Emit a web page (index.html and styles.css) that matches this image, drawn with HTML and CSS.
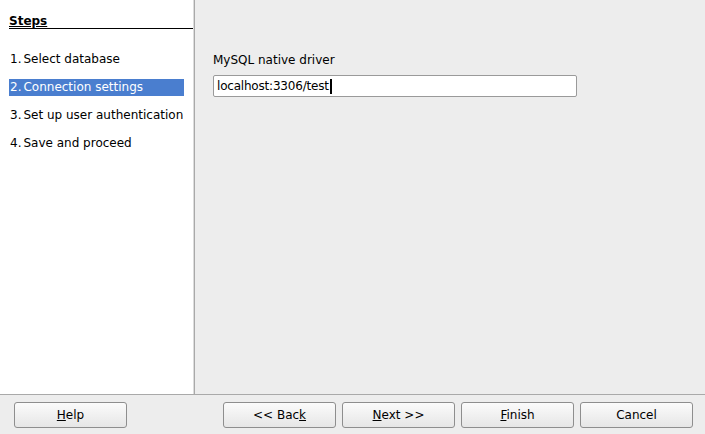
FILE: index.html
```html
<!DOCTYPE html>
<html>
<head>
<meta charset="utf-8">
<link rel="stylesheet" href="styles.css">
</head>
<body>
<div class="main">
  <div class="sidebar">
    <div class="steps-title"><span>Steps</span></div>
    <ul class="steps">
      <li><span class="num">1.</span>Select database</li>
      <li class="active"><span class="num">2.</span>Connection settings</li>
      <li><span class="num">3.</span>Set up user authentication</li>
      <li><span class="num">4.</span>Save and proceed</li>
    </ul>
  </div>
  <div class="content">
    <div class="label">MySQL native driver</div>
    <div class="input">localhost:3306/test<span class="caret"></span></div>
  </div>
</div>
<div class="footer">
  <button class="btn"><u>H</u>elp</button>
  <div class="spacer"></div>
  <button class="btn">&lt;&lt; Bac<u>k</u></button>
  <button class="btn"><u>N</u>ext &gt;&gt;</button>
  <button class="btn"><u>F</u>inish</button>
  <button class="btn">Cancel</button>
</div>
</body>
</html>
```
FILE: styles.css
```css
html, body {
  margin: 0;
  padding: 0;
}
body {
  width: 705px;
  height: 434px;
  background: #ededed;
  font-family: "DejaVu Sans", sans-serif;
  font-size: 12px;
  color: #000;
  overflow: hidden;
}
.main {
  display: flex;
  height: 394px;
}
.sidebar {
  width: 195px;
  box-sizing: border-box;
  background: #fff;
  border-right: 1px solid #a9a9a9;
  padding-left: 9px;
  box-shadow: inset -1px 0 0 #dcdcdc;
}
.steps-title {
  margin-top: 14px;
  height: 14px;
  border-bottom: 1px solid #000;
  margin-right: 1px;
  font-weight: bold;
  font-size: 12px;
  line-height: 15px;
}
.steps-title span {
  text-decoration: underline;
}
.steps {
  list-style: none;
  margin: 22px 0 0 0;
  padding: 0;
}
.steps li {
  height: 17px;
  line-height: 17px;
  margin-bottom: 11px;
  margin-right: 10px;
  padding-left: 1px;
  white-space: nowrap;
}
.steps .num {
  margin-right: 2px;
}
.steps li.active {
  background: #4a7ecf;
  color: #fff;
}
.content {
  flex: 1;
  padding: 52px 0 0 18px;
}
.label {
  height: 17px;
  line-height: 17px;
  margin-bottom: 6px;
}
.input {
  width: 364px;
  height: 22px;
  box-sizing: border-box;
  background: #fff;
  border: 1px solid #9a9a9a;
  border-radius: 2px;
  padding-left: 3px;
  line-height: 20px;
  letter-spacing: -0.2px;
  display: flex;
  align-items: center;
}
.caret {
  display: inline-block;
  width: 2px;
  height: 15px;
  background: #000;
  margin-left: 1px;
}
.footer {
  height: 40px;
  border-top: 1px solid #a9a9a9;
  box-sizing: border-box;
  display: flex;
  align-items: flex-start;
  padding: 7px 12px 0 14px;
  gap: 6px;
}
.spacer {
  flex: 1;
}
.btn {
  width: 113px;
  height: 26px;
  box-sizing: border-box;
  border: 1px solid #8e8e8e;
  border-radius: 3px;
  background: linear-gradient(#fbfbfb, #e6e6e6);
  font-family: "DejaVu Sans", sans-serif;
  font-size: 12px;
  color: #000;
  padding: 0;
  margin: 0;
}
```
